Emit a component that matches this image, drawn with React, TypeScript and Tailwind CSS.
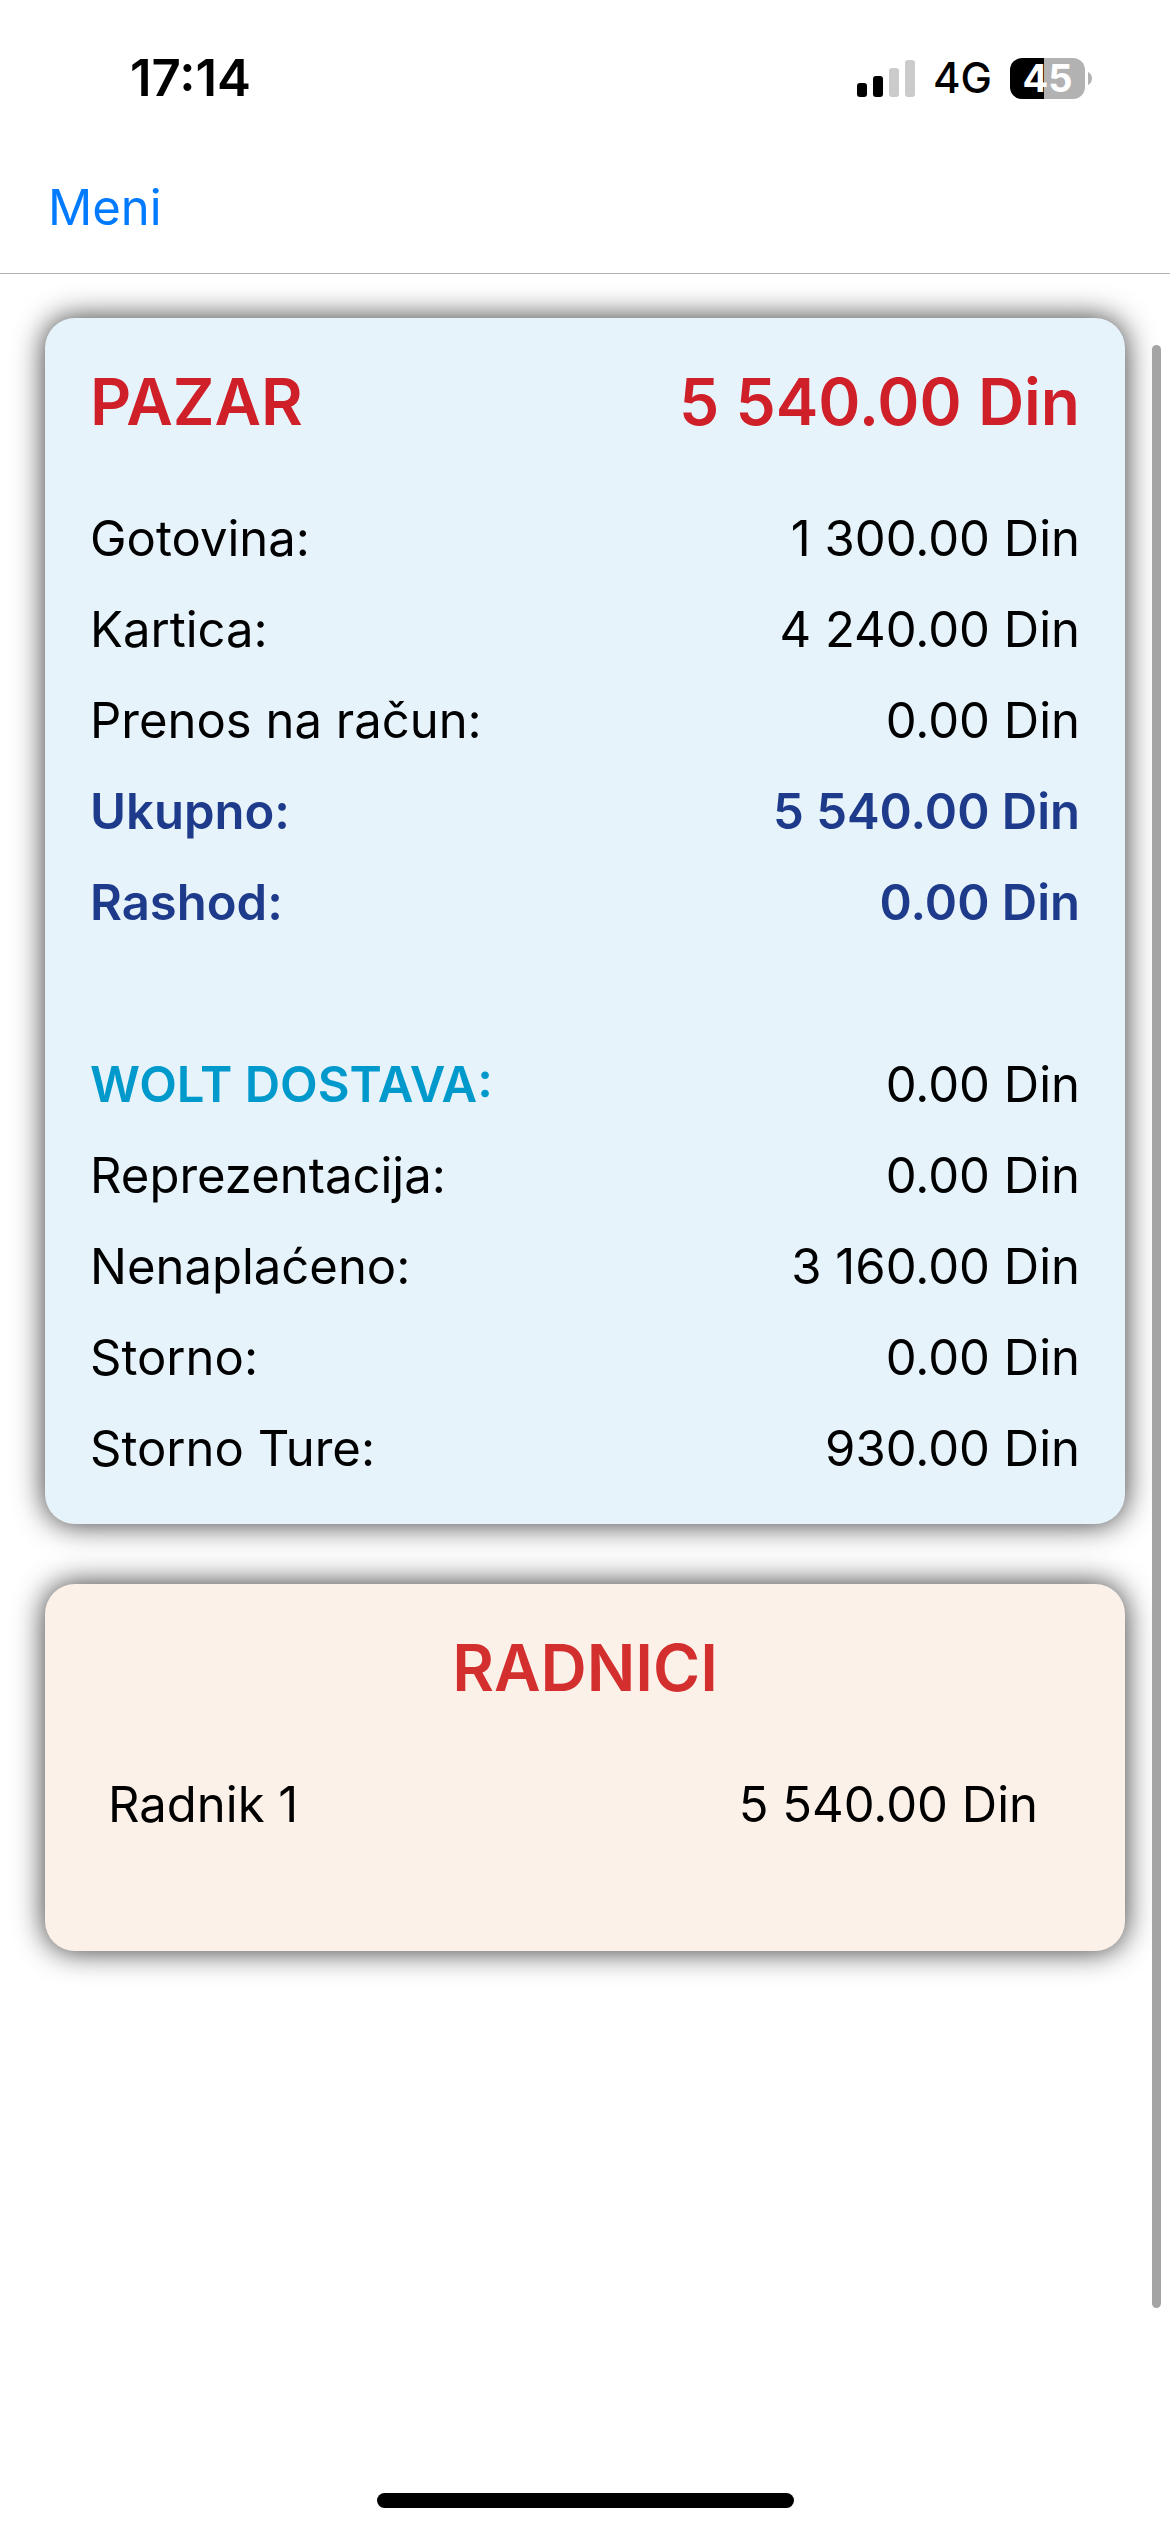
import clsx from "clsx";
import type { PropsWithChildren } from "react";

type Tone = "default" | "total" | "wolt";

type ReportRow = {
  label: string;
  amount: string;
  tone?: Tone;
};

const revenueRows: ReportRow[] = [
  { label: "Gotovina:", amount: "1 300.00 Din" },
  { label: "Kartica:", amount: "4 240.00 Din" },
  { label: "Prenos na račun:", amount: "0.00 Din" },
  { label: "Ukupno:", amount: "5 540.00 Din", tone: "total" },
  { label: "Rashod:", amount: "0.00 Din", tone: "total" },
];

const otherRows: ReportRow[] = [
  { label: "WOLT DOSTAVA:", amount: "0.00 Din", tone: "wolt" },
  { label: "Reprezentacija:", amount: "0.00 Din" },
  { label: "Nenaplaćeno:", amount: "3 160.00 Din" },
  { label: "Storno:", amount: "0.00 Din" },
  { label: "Storno Ture:", amount: "930.00 Din" },
];

const workerRows: ReportRow[] = [{ label: "Radnik 1", amount: "5 540.00 Din" }];

export default function App() {
  return (
    <div className="relative flex min-h-screen flex-col bg-white font-['Inter','Liberation_Sans',sans-serif] text-black">
      <StatusBar />
      <header className="flex h-[132px] items-center border-b border-[#b2b2b2] px-12">
        <button type="button" className="text-[49px] leading-none text-[#007aff]">
          Meni
        </button>
      </header>

      <main className="flex grow flex-col gap-[60px] px-[45px] pt-11">
        <Card className="bg-[#e6f3fb] px-[45px] pb-[30px] text-[#cf1f28]">
          <h1 className="flex h-[175px] justify-between pt-[44px] text-[64px] leading-[80px] font-semibold">
            <span>PAZAR</span>
            <span>5 540.00 Din</span>
          </h1>
          <ReportTable rows={revenueRows} />
          <ReportTable rows={otherRows} className="mt-[91px]" />
        </Card>

        <Card className="bg-[#fcf1e9] pr-[87px] pb-[101px] pl-[63px] text-[#d32f2f]">
          <h2 className="-mr-6 h-[175px] pt-[44px] text-center text-[64px] leading-[80px] font-semibold">
            RADNICI
          </h2>
          <ReportTable rows={workerRows} />
        </Card>
      </main>

      <div className="absolute top-[345px] right-[9px] bottom-56 w-[9px] rounded-full bg-[#a4a4a4]" />

      <footer className="flex justify-center pb-6">
        <div className="h-[15px] w-[417px] rounded-full bg-black" />
      </footer>
    </div>
  );
}

function StatusBar() {
  return (
    <div className="flex h-[142px] items-start justify-between pt-[53px] pr-[78px] pl-[130px]">
      <time className="text-[51px] leading-[50px] font-semibold">17:14</time>
      <div className="flex h-[50px] items-center gap-[18px]">
        <SignalIcon />
        <span className="text-[42px] leading-[50px] font-medium">4G</span>
        <Battery />
      </div>
    </div>
  );
}

function SignalIcon() {
  return (
    <svg width="58" height="37" viewBox="0 0 58 37" aria-label="Signal">
      <rect x="0" y="23" width="10" height="14" rx="3" fill="#000" />
      <rect x="16" y="16" width="10" height="21" rx="3" fill="#000" />
      <rect x="32" y="8" width="10" height="29" rx="3" fill="#cbcbcb" />
      <rect x="48" y="0" width="10" height="37" rx="3" fill="#cbcbcb" />
    </svg>
  );
}

function Battery() {
  return (
    <div className="flex items-center gap-[3px]">
      <div className="flex h-[41px] w-[75px] items-center justify-center rounded-xl bg-linear-to-r from-black from-45% to-[#b2b2b2] to-45% text-[38px] leading-[41px] font-bold text-white">
        45
      </div>
      <svg width="4" height="13" viewBox="0 0 4 13" aria-hidden="true">
        <path d="M0 0C2.4 1 4 3.6 4 6.5S2.4 12 0 13Z" fill="#b2b2b2" />
      </svg>
    </div>
  );
}

function Card({ className, children }: PropsWithChildren<{ className: string }>) {
  return (
    <section
      className={clsx(
        "rounded-[30px] shadow-[0_0_30px_rgba(0,0,0,0.8)]",
        className
      )}
    >
      {children}
    </section>
  );
}

function ReportTable({
  rows,
  className,
}: {
  rows: ReportRow[];
  className?: string;
}) {
  return (
    <div className={className}>
      <table className="w-full text-[49px] leading-[60px] text-black">
        <tbody>
          {rows.map(({ label, amount, tone = "default" }) => (
            <tr
              key={label}
              className={clsx(
                "h-[91px]",
                tone === "total" && "font-semibold text-[#1e3a8a]"
              )}
            >
              <th
                scope="row"
                className={clsx(
                  "p-0 text-left",
                  tone === "default" && "font-normal",
                  tone === "total" && "font-semibold",
                  tone === "wolt" && "font-semibold text-[#0099cc]"
                )}
              >
                {label}
              </th>
              <td className="p-0 text-right">{amount}</td>
            </tr>
          ))}
        </tbody>
      </table>
    </div>
  );
}
